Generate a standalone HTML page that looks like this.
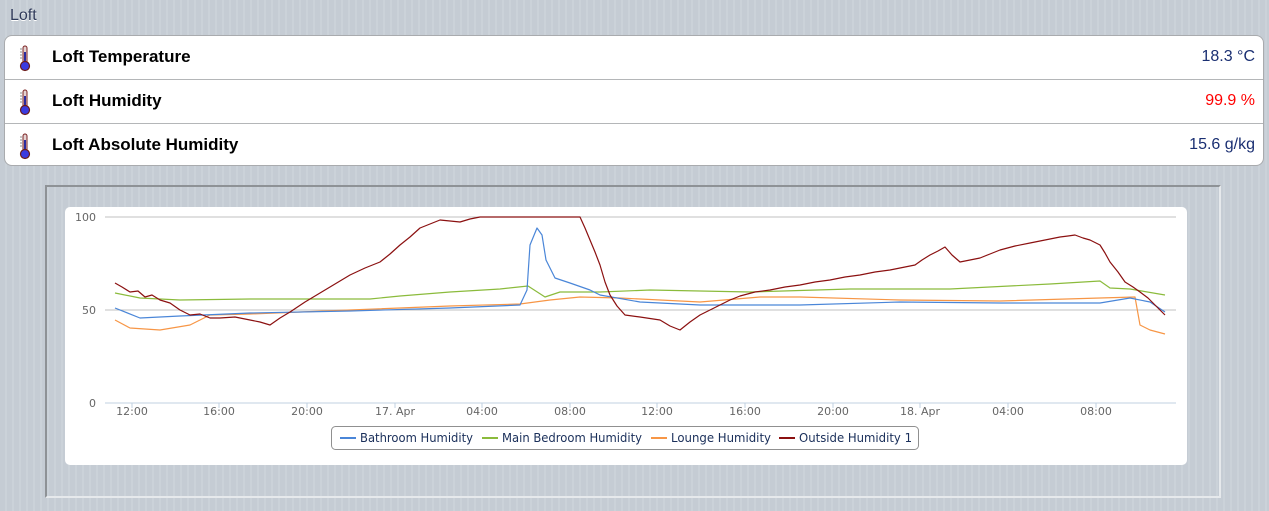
<!DOCTYPE html>
<html><head><meta charset="utf-8"><style>
*{margin:0;padding:0;box-sizing:border-box}
body{width:1269px;height:511px;overflow:hidden;font-family:"Liberation Sans",sans-serif;background:repeating-linear-gradient(90deg,#c5ccd4 0 5px,#cbd2d9 5px 7px);position:relative}
.title{position:absolute;left:10px;top:7px;font-size:16px;color:#2f3a5a;text-shadow:0 1px 0 #fff}
.card{position:absolute;left:4px;top:35px;width:1260px;height:131px;background:#fff;border:1px solid #a9abae;border-radius:8px;overflow:hidden}
.row{height:44px;border-bottom:1px solid #b4b6b8;position:relative}
.row:last-child{border-bottom:none}
.row .l{position:absolute;left:47px;top:11px;font-size:17px;font-weight:bold;color:#000}
.row .v{position:absolute;right:8px;top:12px;font-size:16px;color:#1a2f72}
.row svg{position:absolute;left:12px;top:8px}
.box{position:absolute;left:45px;top:185px;width:1176px;height:313px;border:2px solid #8e9296;border-right-color:#e6e9ec;border-bottom-color:#e6e9ec}
.chart{position:absolute;left:65px;top:207px;width:1122px;height:258px;background:#fff;border-radius:5px}
</style></head><body>
<div class="title">Loft</div>
<div class="card">
<div class="row"><svg width="16" height="28" viewBox="0 0 16 28"><rect x="6" y="2" width="4" height="18" rx="2" fill="#e4d3d3" stroke="#7a2020" stroke-width="1"/><rect x="7" y="8" width="2" height="14" fill="#2a2aa0"/><circle cx="8" cy="22" r="4.5" fill="#3a3ae0" stroke="#6a1a1a" stroke-width="1.2"/><path d="M3 5h2M3 8h2M3 11h2M3 14h2" stroke="#888" stroke-width="1"/></svg><span class="l">Loft Temperature</span><span class="v">18.3 °C</span></div>
<div class="row"><svg width="16" height="28" viewBox="0 0 16 28"><rect x="6" y="2" width="4" height="18" rx="2" fill="#e4d3d3" stroke="#7a2020" stroke-width="1"/><rect x="7" y="8" width="2" height="14" fill="#2a2aa0"/><circle cx="8" cy="22" r="4.5" fill="#3a3ae0" stroke="#6a1a1a" stroke-width="1.2"/><path d="M3 5h2M3 8h2M3 11h2M3 14h2" stroke="#888" stroke-width="1"/></svg><span class="l">Loft Humidity</span><span class="v" style="color:#f00">99.9 %</span></div>
<div class="row"><svg width="16" height="28" viewBox="0 0 16 28"><rect x="6" y="2" width="4" height="18" rx="2" fill="#e4d3d3" stroke="#7a2020" stroke-width="1"/><rect x="7" y="8" width="2" height="14" fill="#2a2aa0"/><circle cx="8" cy="22" r="4.5" fill="#3a3ae0" stroke="#6a1a1a" stroke-width="1.2"/><path d="M3 5h2M3 8h2M3 11h2M3 14h2" stroke="#888" stroke-width="1"/></svg><span class="l">Loft Absolute Humidity</span><span class="v">15.6 g/kg</span></div>
</div>
<div class="box"></div>
<div class="chart"></div>
<svg width="1269" height="511" style="position:absolute;left:0;top:0" font-family="DejaVu Sans, sans-serif">
<line x1="105" y1="217" x2="1176" y2="217" stroke="#c0c0c0"/>
<line x1="105" y1="310" x2="1176" y2="310" stroke="#c0c0c0"/>
<line x1="105" y1="403" x2="1176" y2="403" stroke="#c0d0e0"/>
<g font-size="11" fill="#666" text-anchor="end"><text x="96" y="221">100</text><text x="96" y="314">50</text><text x="96" y="407">0</text></g>
<g font-size="11" fill="#666" text-anchor="middle">
<text x="132" y="415">12:00</text><text x="219" y="415">16:00</text><text x="307" y="415">20:00</text><text x="395" y="415">17. Apr</text><text x="482" y="415">04:00</text><text x="570" y="415">08:00</text><text x="657" y="415">12:00</text><text x="745" y="415">16:00</text><text x="833" y="415">20:00</text><text x="920" y="415">18. Apr</text><text x="1008" y="415">04:00</text><text x="1096" y="415">08:00</text></g>
<g stroke="#c0d0e0"><path d="M132 403v5M219 403v5M307 403v5M395 403v5M482 403v5M570 403v5M657 403v5M745 403v5M833 403v5M920 403v5M1008 403v5M1096 403v5"/></g>
<g fill="none" stroke-width="1.2" stroke-linejoin="round">
<polyline stroke="#8bbb3c" points="115,293 140,298 180,300 250,299 370,299 400,296 450,292 500,289 528,286 545,297 560,292 600,292 650,290 750,292 850,289 950,289 1050,284 1100,281 1110,288 1130,289 1165,295"/>
<polyline stroke="#f79646" points="115,320 130,328 160,330 190,325 210,315 250,314 350,310 450,306 520,304 550,300 580,297 620,298 700,302 760,297 800,297 900,300 1000,301 1100,298 1135,297 1140,325 1150,330 1165,334"/>
<polyline stroke="#4a86d8" points="115,308 140,318 180,316 250,313 350,311 450,308 520,305 527,290 530,245 537,228 542,235 546,260 555,278 570,283 590,290 600,295 640,302 700,305 800,305 900,302 1000,303 1100,303 1130,298 1150,302 1165,312"/>
<polyline stroke="#8b1010" points="115,283 122,287 130,292 138,291 145,297 152,295 160,300 170,303 180,310 190,315 200,314 210,318 220,318 235,317 250,320 260,322 270,325 280,318 290,312 305,302 320,293 335,284 350,275 365,268 380,262 390,254 400,245 410,237 420,228 430,224 440,220 450,221 460,222 470,219 480,217 520,217 580,217 585,228 590,240 595,252 600,265 605,282 610,295 617,306 625,315 640,317 660,320 670,326 680,330 690,322 700,315 710,310 720,305 730,300 740,296 755,292 770,290 785,287 800,285 815,282 830,280 845,277 860,275 875,272 890,270 905,267 915,265 922,260 930,255 938,251 945,247 952,255 960,262 970,260 980,258 990,254 1000,250 1015,246 1030,243 1045,240 1060,237 1068,236 1075,235 1083,238 1090,240 1100,245 1105,253 1110,262 1118,272 1125,282 1133,287 1140,292 1148,298 1155,305 1160,310 1165,315"/>
</g>
<rect x="331.5" y="426.5" width="587" height="23" rx="4" fill="#fff" stroke="#909090"/>
<g font-size="12" fill="#1a2f5a">
<line x1="340" y1="438" x2="356" y2="438" stroke="#4a86d8" stroke-width="2"/><text x="360" y="442" textLength="113" lengthAdjust="spacingAndGlyphs">Bathroom Humidity</text>
<line x1="482" y1="438" x2="498" y2="438" stroke="#8bbb3c" stroke-width="2"/><text x="502" y="442" textLength="140" lengthAdjust="spacingAndGlyphs">Main Bedroom Humidity</text>
<line x1="651" y1="438" x2="667" y2="438" stroke="#f79646" stroke-width="2"/><text x="671" y="442" textLength="100" lengthAdjust="spacingAndGlyphs">Lounge Humidity</text>
<line x1="779" y1="438" x2="795" y2="438" stroke="#8b1010" stroke-width="2"/><text x="799" y="442" textLength="113" lengthAdjust="spacingAndGlyphs">Outside Humidity 1</text>
</g>
</svg>
</body></html>
